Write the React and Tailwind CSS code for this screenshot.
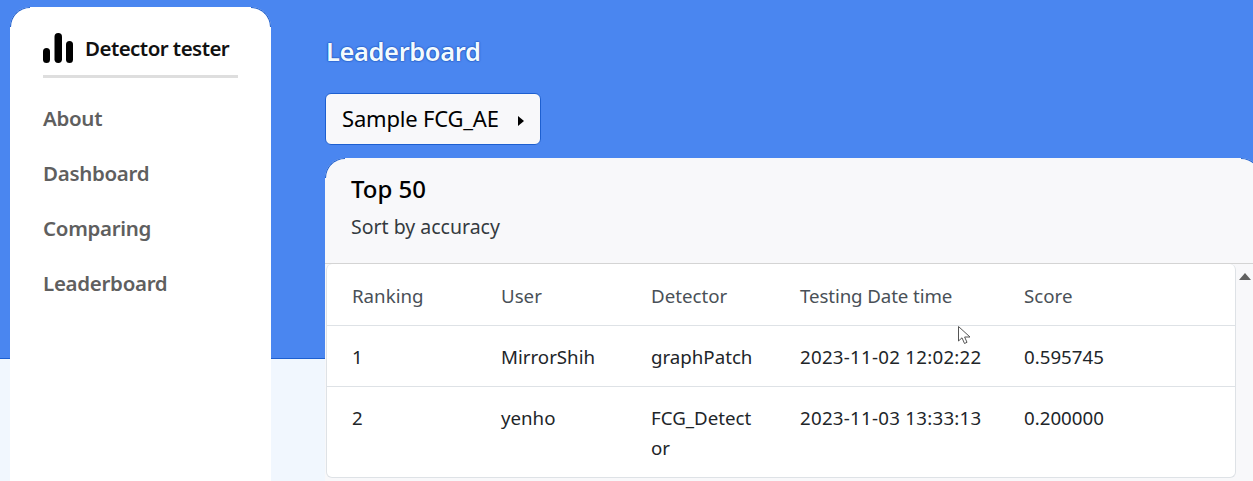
const navItems = ["About", "Dashboard", "Comparing", "Leaderboard"];

const rows = [
  { rank: "1", user: "MirrorShih", detector: "graphPatch", date: "2023-11-02 12:02:22", score: "0.595745" },
  { rank: "2", user: "yenho", detector: "FCG_Detector", date: "2023-11-03 13:33:13", score: "0.200000" },
];

function Logo() {
  return (
    <svg width="30" height="30" viewBox="0 0 30 30" className="shrink-0">
      <rect x="0" y="15" width="7" height="15" rx="3.5" fill="#000" />
      <rect x="11.5" y="0" width="7.5" height="30" rx="3.7" fill="#000" />
      <rect x="23" y="8" width="7" height="22" rx="3.5" fill="#000" />
    </svg>
  );
}

// the dark arc the screenshot shows on rounded corners only
function CornerArc({ side }) {
  return (
    <span
      className={
        side === "left"
          ? "absolute top-0 left-0 size-[20px] rounded-tl-[20px] border-t border-l border-[#1d5fd0]"
          : "absolute top-0 right-0 size-[20px] rounded-tr-[20px] border-t border-r border-[#1d5fd0]"
      }
    />
  );
}

function Sidebar() {
  return (
    <aside className="relative mt-[7px] ml-[10px] h-[600px] w-[261px] shrink-0 rounded-t-[20px] bg-white px-[33px]">
      <CornerArc side="left" />
      <CornerArc side="right" />
      <div className="flex h-[71px] items-center gap-[12px] border-b-[3px] border-[#dedede] pt-[26px] pb-[12px]">
        <Logo />
        <span className="text-[20.5px] font-semibold tracking-[-0.55px] text-[#111]">Detector tester</span>
      </div>
      <nav className="mt-[13px] flex flex-col">
        {navItems.map((item) => (
          <a key={item} className="flex h-[55px] items-center text-[20.5px] font-semibold tracking-[-0.3px] text-[#5f5f5f]">
            {item}
          </a>
        ))}
      </nav>
    </aside>
  );
}

function Leaderboard() {
  return (
    <div className="overflow-hidden rounded-[6px] border-x border-b border-[#dee2e6] bg-white">
      <table className="w-full table-fixed border-collapse text-[18.7px] text-[#212529]">
        <colgroup>
          <col className="w-[149px]" />
          <col className="w-[150px]" />
          <col className="w-[149px]" />
          <col className="w-[224px]" />
          <col />
        </colgroup>
        <thead>
          <tr className="h-[61px] border-b border-[#dee2e6] text-left text-[#495057]">
            <th className="pt-[4px] pl-[25px] font-normal">Ranking</th>
            <th className="pt-[4px] pl-[25px] font-normal">User</th>
            <th className="pt-[4px] pl-[25px] font-normal">Detector</th>
            <th className="pt-[4px] pl-[25px] font-normal tracking-[-0.1px]">Testing Date time</th>
            <th className="pt-[4px] pl-[25px] font-normal">Score</th>
          </tr>
        </thead>
        <tbody>
          {rows.map((r, i) => (
            <tr key={r.rank} className={i === 0 ? "border-b border-[#dee2e6]" : ""}>
              <td className="pt-[16px] pb-[14px] pl-[25px] align-top leading-[30px]">{r.rank}</td>
              <td className="pt-[16px] pb-[14px] pl-[25px] align-top leading-[30px]">{r.user}</td>
              <td className="pt-[16px] pb-[14px] pl-[25px] pr-[20px] align-top leading-[30px] break-all">{r.detector}</td>
              <td className="pt-[16px] pb-[14px] pl-[25px] align-top leading-[30px] tracking-[0.26px]">{r.date}</td>
              <td className="pt-[16px] pb-[14px] pl-[25px] align-top leading-[30px]">{r.score}</td>
            </tr>
          ))}
        </tbody>
      </table>
    </div>
  );
}

export default function App() {
  return (
    <div className="relative h-[481px] w-[1253px] overflow-hidden bg-[#f1f7fe] font-['Noto_Sans',sans-serif]">
      {/* blue banner behind everything */}
      <div className="absolute inset-x-0 top-0 h-[359px] border-b border-[#1d5fd0] bg-[#4a86f0]" />
      <div className="absolute top-[264px] left-[325px] h-[95px] w-px bg-[#1d5fd0]" />

      <div className="relative flex">
        <Sidebar />

        <main className="ml-[54px] min-w-0 flex-1">
          <h1 className="mt-[34px] pl-[1px] text-[25.5px] leading-[34px] font-semibold tracking-[-0.4px] text-[#f2fbff] [text-shadow:0_0_1px_#0b3fa8,0_0_2px_#0b3fa8]">
            Leaderboard
          </h1>

          <button className="mt-[25px] flex h-[52px] w-[216px] items-center rounded-[6px] border border-[#1d5fd0] bg-[#f8f8fa] pb-[2px] pl-[16px] text-[22px] tracking-[-0.2px] text-black">
            Sample FCG_AE
            <span className="mt-[6px] ml-[19px] h-0 w-0 border-y-[5.5px] border-l-[6px] border-y-transparent border-l-black" />
          </button>

          <section className="relative mt-[13px] mr-[-8px] rounded-t-[20px] bg-[#f8f8fa] pt-px">
            <CornerArc side="left" />
            <CornerArc side="right" />
            <div className="h-[105px] border-b border-[#d4d4d4] pt-[13px] pl-[26px]">
              <h2 className="text-[24px] leading-[34px] font-medium text-black">Top 50</h2>
              <p className="mt-[7px] text-[19.5px] leading-[28px] text-[#343a40]">Sort by accuracy</p>
            </div>
            <div className="flex">
              <div className="ml-px w-[910px] shrink-0">
                <Leaderboard />
              </div>
              <div className="h-[300px] w-[17px] shrink-0 pt-[9px] pl-[3px]">
                <span className="block h-0 w-0 border-x-[6px] border-b-[7px] border-x-transparent border-b-[#606060]" />
              </div>
            </div>
          </section>
        </main>
      </div>

      {/* mouse pointer captured in the screenshot */}
      <svg width="14" height="20" viewBox="0 0 14 20" className="absolute top-[326px] left-[958px]">
        <path d="M0.5 0.5V15L4 11.8L6.5 17.5L9 16.3L6.6 11H12Z" fill="#fff" stroke="#555" strokeWidth="1" />
      </svg>
    </div>
  );
}
